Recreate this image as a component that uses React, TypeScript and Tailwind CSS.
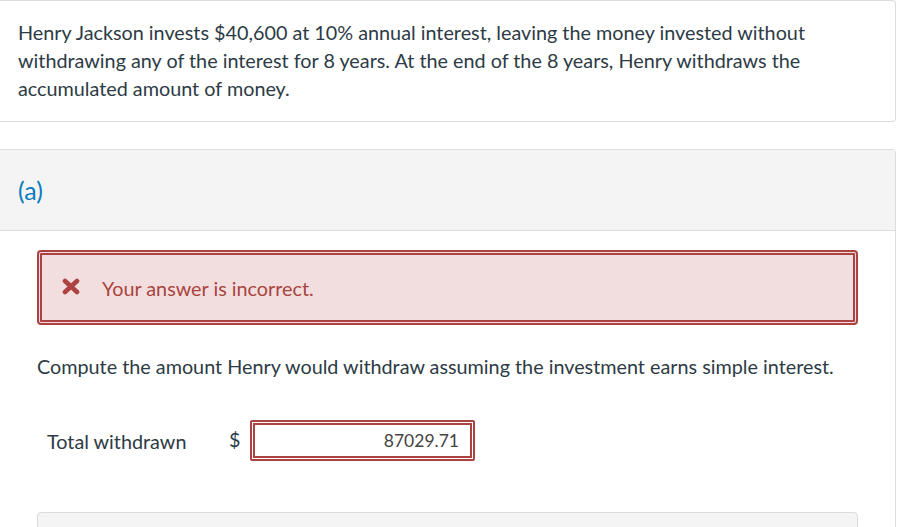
import React from "react";

export default function App() {
  return (
    <div
      className="w-[897px] h-[527px] overflow-hidden bg-white text-[#2d3b45]"
      style={{ fontFamily: "Lato, 'Liberation Sans', sans-serif" }}
    >
      <div className="w-[896px] h-[122px] border border-l-0 border-[#dcdcdc] rounded-r-[4px] bg-white pl-[18px] pr-[18px] pt-[17px]">
        <p className="text-[19.8px] leading-[28px]">
          Henry Jackson invests $40,600 at 10% annual interest, leaving the money invested without
          withdrawing any of the interest for 8 years. At the end of the 8 years, Henry withdraws the
          accumulated amount of money.
        </p>
      </div>

      <div className="mt-[27px] w-[896px] h-[400px] border-t border-r border-[#dcdcdc] rounded-tr-[4px]">
        <div className="h-[81px] bg-[#f4f4f4] border-b border-[#dcdcdc] pl-[18px] flex items-center">
          <span className="text-[25px] leading-[30px] text-[#0b7cbf]">(a)</span>
        </div>

        <div className="pl-[37px] pr-[37px] pt-[19px]">
          <div className="h-[75px] border-[5px] border-double border-[#ad4242] rounded-[4px] bg-[#f2dede] flex items-center pl-[20px]">
            <svg width="18" height="17" viewBox="0 0 18 17" className="mb-[2px]">
              <path d="M3 3 L15 14 M15 3 L3 14" stroke="#ad4242" strokeWidth="4.6" strokeLinecap="round" />
            </svg>
            <span className="ml-[22px] text-[19.8px] text-[#a9443f] leading-[28px]">Your answer is incorrect.</span>
          </div>

          <p className="mt-[27px] text-[19.8px] leading-[28px]">
            Compute the amount Henry would withdraw assuming the investment earns simple interest.
          </p>

          <div className="mt-[40px] flex items-center">
            <span className="ml-[10px] w-[182px] text-[19.8px] leading-[28px]">Total withdrawn</span>
            <span className="w-[21px] text-[19.8px] leading-[28px] pb-[4px]">$</span>
            <div className="w-[225px] h-[41px] border-[5px] border-double border-[#ad4242] rounded-[2px] flex items-center justify-end pr-[11px]">
              <span className="text-[17.5px] text-[#444] pt-[2px]">87029.71</span>
            </div>
          </div>

          <div className="mt-[51px] w-[821px] h-[40px] border border-[#dcdcdc] rounded-t-[4px] bg-[#f4f4f4]" />
        </div>
      </div>
    </div>
  );
}
